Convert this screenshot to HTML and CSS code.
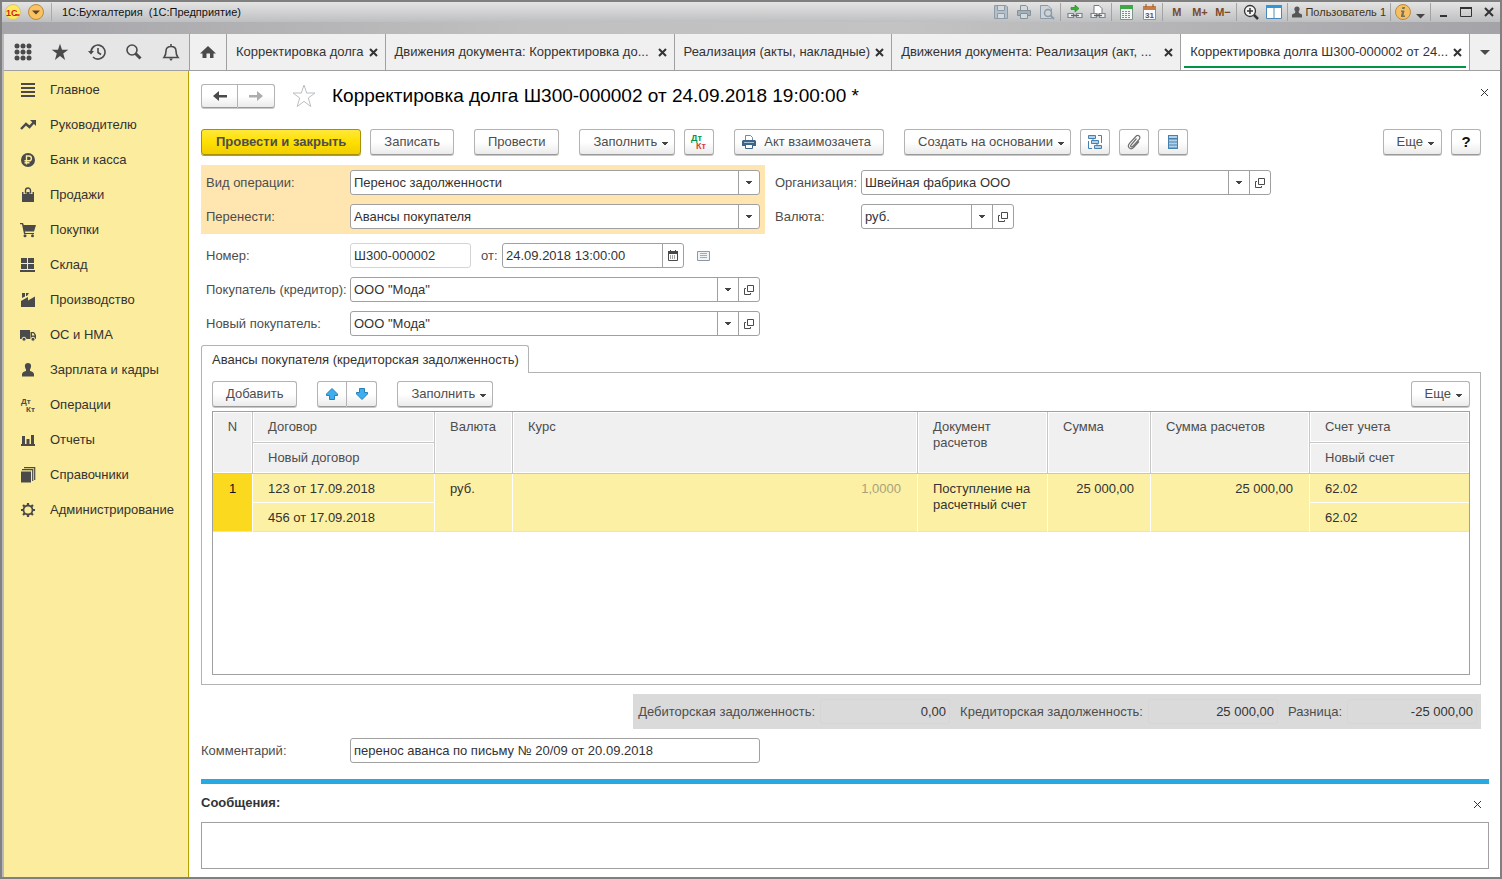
FILE: index.html
```
<!DOCTYPE html>
<html lang="ru">
<head>
<meta charset="utf-8">
<title>1С:Бухгалтерия (1С:Предприятие)</title>
<link rel="stylesheet" href="styles.css">
</head>
<body>
<svg class="sprite" aria-hidden="true">
  <symbol id="caret" viewBox="0 0 6 4"><path d="M0 0H6V1H5V2H4V3H2V2H1V1H0Z"/></symbol>
  <symbol id="cross" viewBox="0 0 9 9"><path d="M1 1L8 8M8 1L1 8" fill="none" stroke="currentColor"/></symbol>
  <symbol id="open" viewBox="0 0 10 10"><path d="M3.500 .5H9.500V6.500H3.500ZM2 3.500H.5V9.500H6.500V8" fill="none" stroke="currentColor"/></symbol>
  <symbol id="star" viewBox="0 0 24 24"><path d="M12 1L14.700 9H23L16.300 14L18.800 22.500L12 17.400L5.200 22.500L7.700 14L1 9H9.300Z"/></symbol>
  <symbol id="arrow-up" viewBox="0 0 12 12"><path d="M6 .5L11.500 6V7.500H8.500V11.500H3.500V7.500H.5V6Z" fill="#3eaef0" stroke="#2580b5"/></symbol>
  <symbol id="chain" viewBox="0 0 16 16"><path d="M1 9.500H6.500V13.500H1ZM9.500 9.500H15V13.500H9.500Z" fill="#eef0f2" stroke="#7b868e" stroke-width="1.200"/><path d="M4 11.500H12" stroke="#5a666e" stroke-width="1.300"/></symbol>
</svg>
<div class="window">
  <header class="titlebar">
    <div class="titlebar-row">
      <svg class="logo" viewBox="0 0 16 16"><circle cx="8" cy="8" r="7.500" fill="#ffe95c" stroke="#d9c67c"/><text x="1" y="11.500" class="logo-text">1С</text><path d="M10 11H14.500" stroke="#d8211c" stroke-width="1.500"/></svg>
      <button class="round-menu" aria-label="Меню"><svg width="16" height="16" viewBox="0 0 16 16"><circle cx="8" cy="8" r="7.500" fill="#fac263" stroke="#b98a3d"/><path d="M4 6.500H12L8 10.500Z" fill="#5b4626"/></svg></button>
      <h1 class="app-title">1С:Бухгалтерия&nbsp; (1С:Предприятие)</h1>
      <div class="tool-group plain">
        <button aria-label="Сохранить"><svg width="16" height="16" viewBox="0 0 16 16" fill="none" stroke="#8c9ba7"><path d="M1.500 1.500H13L14.500 3V14.500H1.500Z" fill="#b4c0c9"/><path d="M4.500 2V6.500H11.500V2M4.500 14V9.500H11.500V14" fill="#d4d9dc"/></svg></button>
        <button aria-label="Печать"><svg width="16" height="16" viewBox="0 0 16 16" fill="#a4b0b8" stroke="#84929c"><path d="M4.500 6V1.500H10L11.500 3V6" fill="#d5d9db"/><path d="M1.500 6.500H14.500V11.500H1.500Z"/><path d="M4.500 9.500H11.500V14.500H4.500Z" fill="#d5d9db"/></svg></button>
        <button aria-label="Просмотр"><svg width="16" height="16" viewBox="0 0 16 16" fill="none" stroke="#8c9ba7"><path d="M1.500 1.500H9L12.500 5V14.500H1.500Z" fill="#cdd3d6"/><circle cx="9" cy="9" r="3.500" stroke-width="1.500"/><path d="M11.500 11.500L15 15" stroke-width="2"/></svg></button>
      </div>
      <div class="tool-group">
        <button aria-label="Получить ссылку"><svg width="16" height="16" viewBox="0 0 16 16"><use href="#chain"/><path d="M4 3.500H8V1L12 4.500L8 8V5.500H4Z" fill="#35b335" stroke="#188119" stroke-width=".6"/></svg></button>
        <button aria-label="Перейти по ссылке"><svg width="16" height="16" viewBox="0 0 16 16"><path d="M4 1.500H9L12 4.500V10H4Z" fill="#fff" stroke="#717b82"/><use href="#chain"/></svg></button>
      </div>
      <div class="tool-group">
        <button aria-label="Калькулятор"><svg width="16" height="16" viewBox="0 0 16 16"><path d="M2.500 1.500H14.500V15.500H2.500Z" fill="#f4f6f5" stroke="#7e938a"/><path d="M2 1H15V5H2Z" fill="#41a647"/><path d="M4 7.500H13M4 9.500H13M4 11.500H13M4 13.500H13" stroke="#7c8d95" stroke-dasharray="2 1"/></svg></button>
        <button aria-label="Календарь"><svg width="16" height="16" viewBox="0 0 16 16"><path d="M2.500 2.500H14.500V15.500H2.500Z" fill="#f9fafb" stroke="#8494a0"/><path d="M2 2H15V6H2Z" fill="#c87b45"/><path d="M5 0V3M12 0V3" stroke="#80512f"/><text x="4" y="13.500" class="cal-text">31</text></svg></button>
      </div>
      <div class="tool-group memory"><button>M</button><button>M+</button><button>M−</button></div>
      <div class="tool-group">
        <button aria-label="Масштаб"><svg width="16" height="16" viewBox="0 0 16 16" fill="none" stroke="#343434"><circle cx="7" cy="7" r="5.500" fill="#f4f4f4" stroke-width="1.300"/><path d="M4 7H10M7 4V10" stroke-width="1.500"/><path d="M11 11L15 15" stroke-width="2.500"/></svg></button>
        <button aria-label="Панели"><svg width="16" height="16" viewBox="0 0 16 16"><path d="M.5 1.500H15.500V14.500H.5Z" fill="#fff" stroke="#4b87b8"/><path d="M0 1H16V4H0Z" fill="#3096dc"/><path d="M8 4V14" stroke="#5d8bb0"/></svg></button>
      </div>
      <div class="tool-group user"><button><svg width="10" height="12" viewBox="0 0 10 12" fill="#565656"><circle cx="5" cy="3" r="2.600"/><path d="M3.500 5H6.500L7 7L10 8.500V11.500H0V8.500L3 7Z"/></svg>Пользователь 1</button></div>
      <div class="tool-group info">
        <button aria-label="Справка"><svg width="16" height="16" viewBox="0 0 16 16"><circle cx="8" cy="8" r="7.500" fill="#f5c064" stroke="#b98a3d"/><path d="M7.500 3H10L9.500 5H7ZM6 6.500H9.500L8.500 11.500H10V13H6V11.500L7 8H6Z" fill="#7b705d"/></svg></button>
        <button class="info-caret" aria-label="Еще"><svg width="9" height="5" viewBox="0 0 9 5"><path d="M0 0H9L4.500 4.500Z" fill="#454545"/></svg></button>
      </div>
      <div class="tool-group win">
        <button aria-label="Свернуть"><svg width="12" height="12" viewBox="0 0 12 12"><path d="M3 10H10" stroke="#333" stroke-width="2"/></svg></button>
        <button aria-label="Развернуть"><svg width="12" height="12" viewBox="0 0 12 12"><path d="M.5 1.500H11.500V10.500H.5Z" fill="none" stroke="#333"/><path d="M0 2H12" stroke="#333" stroke-width="2"/></svg></button>
        <button aria-label="Закрыть"><svg width="12" height="12" viewBox="0 0 12 12"><path d="M2 2L10 10M10 2L2 10" stroke="#333" stroke-width="2"/></svg></button>
      </div>
    </div>
  </header>

  <nav class="tabbar">
    <div class="quick">
      <button aria-label="Функции"><svg width="18" height="18" viewBox="0 0 18 18" fill="#4a4a4a"><circle cx="3" cy="3" r="2.500"/><circle cx="9" cy="3" r="2.500"/><circle cx="15" cy="3" r="2.500"/><circle cx="3" cy="9" r="2.500"/><circle cx="9" cy="9" r="2.500"/><circle cx="15" cy="9" r="2.500"/><circle cx="3" cy="15" r="2.500"/><circle cx="9" cy="15" r="2.500"/><circle cx="15" cy="15" r="2.500"/></svg></button>
      <button aria-label="Избранное"><svg width="18" height="18" fill="#4a4a4a"><use href="#star"/></svg></button>
      <button aria-label="История"><svg width="18" height="18" viewBox="0 0 18 18" fill="none" stroke="#4a4a4a" stroke-width="1.600"><path d="M3 9A7 7 0 1 1 5 14"/><path d="M10 5V9.500L13 11.500"/><path d="M0 8H6L3 11.500Z" fill="#4a4a4a" stroke="none"/></svg></button>
      <button aria-label="Поиск"><svg width="18" height="18" viewBox="0 0 18 18" fill="none" stroke="#4a4a4a"><circle cx="7" cy="7" r="5" stroke-width="1.600"/><path d="M10.500 10.500L15.500 15.500" stroke-width="3"/></svg></button>
      <button aria-label="Уведомления"><svg width="18" height="18" viewBox="0 0 18 18" fill="none" stroke="#4a4a4a" stroke-width="1.600"><path d="M2 14.500C4 12 4 11 4 8C4 5 6 3.500 9 3.500S14 5 14 8C14 11 14 12 16 14.500ZM9 1V3"/><path d="M7 15.500H11L9 18Z" fill="#4a4a4a" stroke="none"/></svg></button>
    </div>
    <a class="tab home" href="#" aria-label="Начальная страница"><svg width="16" height="14" viewBox="0 0 16 14" fill="#4a4a4a"><path d="M8 1L16 8.500H13.500V13H10V8.500H6.500V13H2.500V8.500H0Z"/></svg></a>
    <div class="tab"><a href="#">Корректировка долга</a><button aria-label="Закрыть"><svg width="9" height="9"><use href="#cross"/></svg></button></div>
    <div class="tab wide"><a href="#">Движения документа: Корректировка до...</a><button aria-label="Закрыть"><svg width="9" height="9"><use href="#cross"/></svg></button></div>
    <div class="tab"><a href="#">Реализация (акты, накладные)</a><button aria-label="Закрыть"><svg width="9" height="9"><use href="#cross"/></svg></button></div>
    <div class="tab wide"><a href="#">Движения документа: Реализация (акт, ...</a><button aria-label="Закрыть"><svg width="9" height="9"><use href="#cross"/></svg></button></div>
    <div class="tab wide active"><a href="#">Корректировка долга Ш300-000002 от 24...</a><button aria-label="Закрыть"><svg width="9" height="9"><use href="#cross"/></svg></button></div>
    <button class="tab-more" aria-label="Все вкладки"><svg width="10" height="5" viewBox="0 0 10 5"><path d="M0 0H10L5 5Z" fill="#4a4a4a"/></svg></button>
  </nav>

  <div class="workspace">
    <nav class="sidebar">
      <a href="#"><svg viewBox="0 0 16 16"><path d="M1 2H15M1 6H15M1 10H15M1 14H15" stroke="#4a4a4a" stroke-width="2"/></svg>Главное</a>
      <a href="#"><svg viewBox="0 0 16 16"><path d="M1 12L6 7L9.500 10L14 5" fill="none" stroke="#4a4a4a" stroke-width="2.400"/><path d="M10 3H16V9Z"/></svg>Руководителю</a>
      <a href="#"><svg viewBox="0 0 16 16"><circle cx="8" cy="8" r="7"/><path d="M6.500 12.500V4H9A2.200 2.200 0 0 1 9 8.800H4.500M4.500 10.800H9.500" fill="none" stroke="#fbec9e" stroke-width="1.400"/></svg>Банк и касса</a>
      <a href="#"><svg viewBox="0 0 16 16"><path d="M2 5H14V15H2Z"/><path d="M5 7V3.500A3 2.800 0 0 1 11 3.500V7" fill="none" stroke="#fbec9e" stroke-width="3"/><path d="M5.500 6.500V3.500A2.500 2.500 0 0 1 10.500 3.500V6.500" fill="none" stroke="#4a4a4a" stroke-width="1.400"/></svg>Продажи</a>
      <a href="#"><svg viewBox="0 0 16 16"><path d="M0 1H3L3.800 3H16L14 9.500H5L5.300 11H14V12H4L2 2.300H0Z"/><circle cx="5" cy="13.800" r="1.500"/><circle cx="12.500" cy="13.800" r="1.500"/></svg>Покупки</a>
      <a href="#"><svg viewBox="0 0 16 16"><path d="M1 1H7V6H1ZM8 1H14V6H8ZM1 7H7V12H1ZM8 7H14V12H8ZM0 13H15V15H0Z"/></svg>Склад</a>
      <a href="#"><svg viewBox="0 0 16 16"><path d="M1 15V9L8 5V8.500L15 4.500V15ZM2 1H5V4.500L2 6ZM6 1H9L7 4H6Z"/></svg>Производство</a>
      <a href="#"><svg viewBox="0 0 16 16"><path d="M0 3H10V12H0ZM10.500 5H14L16 8V12H10.500Z"/><path d="M12 6.200H13.500L14.700 8.500H12Z" fill="#fbec9e"/><g stroke="#fbec9e"><circle cx="4" cy="12.200" r="2"/><circle cx="13" cy="12.200" r="2"/></g></svg>ОС и НМА</a>
      <a href="#"><svg viewBox="0 0 16 16"><path d="M8 1C12 1 11.500 5 10 7.500V9C12.500 9.500 14 10.500 14 12.500V14.500H2V12.500C2 10.500 3.500 9.500 6 9V7.500C4.500 5 4 1 8 1Z"/></svg>Зарплата и кадры</a>
      <a href="#"><svg viewBox="0 0 16 16" class="dtkt"><text x="1" y="7">Дт</text><text x="6" y="15">Кт</text></svg>Операции</a>
      <a href="#"><svg viewBox="0 0 16 16"><path d="M2 4H5V12H2ZM6.500 7H9.500V12H6.500ZM11 3H14V12H11ZM1 12H15V14H1Z"/></svg>Отчеты</a>
      <a href="#"><svg viewBox="0 0 16 16"><path d="M1 4.500H11V15.500H1Z"/><path d="M2 2.700H12.700V14M4 .7H14.700V13" fill="none" stroke="#4a4a4a" stroke-width="1.200"/></svg>Справочники</a>
      <a href="#"><svg viewBox="0 0 16 16"><g fill="none" stroke="#4a4a4a"><circle cx="8" cy="8" r="4.500" stroke-width="1.800"/><path d="M8 1V3.500M8 12.500V15M1 8H3.500M12.500 8H15M3 3L4.800 4.800M11.200 11.200L13 13M13 3L11.200 4.800M4.800 11.200L3 13" stroke-width="2.200"/></g></svg>Администрирование</a>
    </nav>

    <main class="document">
      <div class="heading">
        <div class="pair nav-pair">
          <button class="btn" aria-label="Назад"><svg width="14" height="12" viewBox="0 0 14 12"><path d="M0 6L6 1V5H14V7.500H6V11Z" fill="#4a4a4a"/></svg></button><button class="btn" aria-label="Вперед"><svg width="14" height="12" viewBox="0 0 14 12"><path d="M14 6L8 1V5H0V7.500H8V11Z" fill="#adadad"/></svg></button>
        </div>
        <button class="favorite" aria-label="В избранное"><svg width="24" height="24" fill="#fff" stroke="#b9bfc5"><use href="#star"/></svg></button>
        <h2>Корректировка долга Ш300-000002 от 24.09.2018 19:00:00 *</h2>
        <button class="close" aria-label="Закрыть"><svg width="9" height="9"><use href="#cross"/></svg></button>
      </div>

      <div class="commands">
        <button class="btn primary">Провести и закрыть</button>
        <button class="btn">Записать</button>
        <button class="btn apart">Провести</button>
        <button class="btn menu apart">Заполнить<svg class="caret"><use href="#caret"/></svg></button>
        <button class="btn icon" aria-label="Дт Кт"><svg width="18" height="18" viewBox="0 0 18 18" class="dtkt color"><text x="1" y="8">Дт</text><text x="6" y="16">Кт</text></svg></button>
        <button class="btn print apart"><svg width="14" height="14" viewBox="0 0 14 14"><path d="M3.500 5V.5H8.500L10.500 2.500V5" fill="#fff" stroke="#6f8ba5"/><path d="M1 5H13L14 6V11H0V6Z" fill="#3c6489"/><path d="M2 7.500H12" stroke="#a9c1d6"/><path d="M3.500 9.500H10.500V13.500H3.500Z" fill="#fff" stroke="#3c6489"/></svg>Акт взаимозачета</button>
        <button class="btn menu apart">Создать на основании<svg class="caret"><use href="#caret"/></svg></button>
        <button class="btn icon" aria-label="Структура"><svg width="16" height="16" viewBox="0 0 16 16" fill="#b3d2ea" stroke="#4580ae"><path d="M1.500 1.500H8.500V4.500H1.500ZM4.500 6.500H11.500V9.500H4.500ZM7.500 11.500H14.500V14.500H7.500Z"/><path d="M11 1.500H14.500V9M1.500 7V14.500H5M6 5V6M10 10V11" fill="none"/></svg></button>
        <button class="btn icon" aria-label="Файлы"><svg width="16" height="16" viewBox="0 0 16 16" fill="none" stroke="#707070" stroke-width="1.200"><path d="M10.500 4.500L5 11C4 12.500 5.500 13.500 6.800 12.300L13 5.500C15.500 2.500 12 .2 9.800 2.500L3.500 9.300C.5 13 4.500 16.500 7.500 13.500L13 7.500"/></svg></button>
        <button class="btn icon" aria-label="Список"><svg width="16" height="16" viewBox="0 0 16 16"><path d="M3 1H13V15H3Z" fill="#4580ae"/><path d="M4 3H12M4 6.500H12M4 9.500H12M4 12.500H12" stroke="#b3d2ea" stroke-width="2"/></svg></button>
        <button class="btn menu end">Еще<svg class="caret"><use href="#caret"/></svg></button>
        <button class="btn icon help">?</button>
      </div>

      <div class="form">
        <div class="column left">
          <div class="highlight">
            <div class="row"><label for="kind">Вид операции:</label><div class="field wide"><select id="kind"><option>Перенос задолженности</option></select><svg class="caret"><use href="#caret"/></svg></div></div>
            <div class="row"><label for="move">Перенести:</label><div class="field wide"><select id="move"><option>Авансы покупателя</option></select><svg class="caret"><use href="#caret"/></svg></div></div>
          </div>
          <div class="row"><label for="number">Номер:</label><div class="field number"><input id="number" value="Ш300-000002"></div><label class="from" for="date">от:</label><div class="field date"><input id="date" value="24.09.2018 13:00:00"><button aria-label="Календарь"><svg width="10" height="11" viewBox="0 0 10 11"><path d="M.5 2H9.500V10.500H.5Z" fill="none" stroke="#4a4a4a"/><path d="M0 1H10V4H0ZM2 0H3V2H2ZM7 0H8V2H7Z" fill="#4a4a4a"/><path d="M2 6H8M2 8H8" stroke="#4a4a4a" stroke-dasharray="1 1"/></svg></button></div><svg class="note" width="13" height="10" viewBox="0 0 13 10"><path d="M.5 .5H12.500V9.500H.5Z" fill="#f1f4f6" stroke="#8b9aa8"/><path d="M3 2.500H10M3 4.500H10M3 6.500H10" stroke="#a0acb7"/></svg></div>
          <div class="row"><label for="buyer">Покупатель (кредитор):</label><div class="field wide ref"><select id="buyer"><option>ООО "Мода"</option></select><svg class="caret"><use href="#caret"/></svg><button aria-label="Открыть"><svg width="10" height="10"><use href="#open"/></svg></button></div></div>
          <div class="row"><label for="newbuyer">Новый покупатель:</label><div class="field wide ref"><select id="newbuyer"><option>ООО "Мода"</option></select><svg class="caret"><use href="#caret"/></svg><button aria-label="Открыть"><svg width="10" height="10"><use href="#open"/></svg></button></div></div>
        </div>
        <div class="column right">
          <div class="row"><label for="org">Организация:</label><div class="field wide ref"><select id="org"><option>Швейная фабрика ООО</option></select><svg class="caret"><use href="#caret"/></svg><button aria-label="Открыть"><svg width="10" height="10"><use href="#open"/></svg></button></div></div>
          <div class="row"><label for="currency">Валюта:</label><div class="field short ref"><select id="currency"><option>руб.</option></select><svg class="caret"><use href="#caret"/></svg><button aria-label="Открыть"><svg width="10" height="10"><use href="#open"/></svg></button></div></div>
        </div>
      </div>

      <div class="page-tabs"><button class="page-tab">Авансы покупателя (кредиторская задолженность)</button></div>
      <section class="page">
        <div class="commands">
          <button class="btn">Добавить</button>
          <div class="pair apart"><button class="btn" aria-label="Вверх"><svg width="12" height="12"><use href="#arrow-up"/></svg></button><button class="btn" aria-label="Вниз"><svg class="flip" width="12" height="12"><use href="#arrow-up"/></svg></button></div>
          <button class="btn menu apart">Заполнить<svg class="caret"><use href="#caret"/></svg></button>
          <button class="btn menu end">Еще<svg class="caret"><use href="#caret"/></svg></button>
        </div>
        <div class="grid">
          <table>
            <colgroup><col class="c-n"><col class="c-contract"><col class="c-cur"><col><col class="c-doc"><col class="c-sum"><col class="c-calc"><col class="c-acc"></colgroup>
            <thead>
              <tr><th rowspan="2" class="n">N</th><th>Договор</th><th rowspan="2">Валюта</th><th rowspan="2">Курс</th><th rowspan="2">Документ расчетов</th><th rowspan="2">Сумма</th><th rowspan="2">Сумма расчетов</th><th>Счет учета</th></tr>
              <tr><th>Новый договор</th><th>Новый счет</th></tr>
            </thead>
            <tbody>
              <tr><td rowspan="2" class="n">1</td><td>123 от 17.09.2018</td><td rowspan="2">руб.</td><td rowspan="2" class="num muted">1,0000</td><td rowspan="2">Поступление на расчетный счет</td><td rowspan="2" class="num">25 000,00</td><td rowspan="2" class="num">25 000,00</td><td>62.02</td></tr>
              <tr><td>456 от 17.09.2018</td><td>62.02</td></tr>
            </tbody>
          </table>
        </div>
      </section>

      <div class="totals">
        <label for="debit">Дебиторская задолженность:</label><input id="debit" value="0,00" readonly>
        <label for="credit">Кредиторская задолженность:</label><input id="credit" value="25 000,00" readonly>
        <label for="diff">Разница:</label><input id="diff" value="-25 000,00" readonly>
      </div>

      <div class="row comment"><label for="comment">Комментарий:</label><div class="field wide"><input id="comment" value="перенос аванса по письму № 20/09 от 20.09.2018"></div></div>

      <section class="messages">
        <div class="messages-head"><h3>Сообщения:</h3><button class="close" aria-label="Закрыть"><svg width="9" height="9"><use href="#cross"/></svg></button></div>
        <textarea aria-label="Сообщения"></textarea>
      </section>
    </main>
  </div>
</div>
</body>
</html>
```
FILE: styles.css
```
* { box-sizing: border-box; }

:root {
  --line: #a0a0a0;
  --ink: #333;
  --label: #4d4d4d;
  --icon: #4a4a4a;
  --field-h: 25px;
  --gap: 9px;
}

body {
  margin: 0;
  font: 13px/16px "Liberation Sans", Arial, sans-serif;
  color: var(--ink);
  background: #fff;
}

button, input, select, textarea { font: inherit; color: inherit; margin: 0; }
button { padding: 0; border: 0; background: none; display: inline-flex; align-items: center; justify-content: center; white-space: nowrap; }
a { color: inherit; text-decoration: none; }
h1, h2, h3 { margin: 0; font-weight: normal; }
svg { flex: none; display: block; }
.sprite { position: absolute; width: 0; height: 0; }
.caret { width: 6px; height: 4px; fill: #444; }
.flip { transform: rotate(180deg); }

.window {
  min-height: 100vh;
  display: flex;
  flex-direction: column;
  border: 2px solid #808080;
  background: linear-gradient(90deg, #b8b8bc 2px, #fff 2px);
}

/* Title bar */
.titlebar {
  height: 32px;
  background: linear-gradient(90deg, #a5a5aa, #c0c0c0 35%, #c3c3c3 60%, #a3a3a8);
}
.titlebar-row {
  display: flex;
  align-items: center;
  height: 20px;
  padding-left: 3px;
  background: linear-gradient(#e4e4e4, #bebfc1);
}
.logo { width: 16px; height: 16px; }
.logo-text { font: bold 9px "Liberation Sans", sans-serif; fill: #d8211c; }
.cal-text { font: bold 8px "Liberation Sans", sans-serif; fill: #555; }
.round-menu { margin: 0 7px; }
.app-title {
  flex: 1;
  padding-left: 10px;
  border-left: 1px solid #aaa;
  font-size: 11px;
  line-height: 18px;
  color: #111;
}
.tool-group { display: flex; align-items: center; height: 18px; padding: 0 2px; border-left: 1px solid #a3a3a3; }
.tool-group.plain { border-left-color: transparent; }
.tool-group button { width: 23px; height: 18px; }
.memory button { color: #7a4a2a; font-weight: bold; font-size: 11px; }
.tool-group.user { padding: 0 4px; }
.tool-group.user button { width: auto; gap: 3px; font-size: 11px; color: #3f3418; }
.info button:first-child { width: 20px; }
.tool-group .info-caret { width: 15px; padding-top: 8px; }
.tool-group.win { padding: 0; }

/* Open windows */
.tabbar { display: flex; height: 37px; margin-left: 2px; border-bottom: 1px solid var(--line); background: #f0f0f0; }
.quick { width: 186px; display: flex; align-items: center; background: #e6e6e6; border-right: 1px solid var(--line); }
.quick button { width: 37px; height: 36px; }
.tab { display: flex; align-items: center; justify-content: space-between; gap: 5px; padding: 0 7px 0 9px; border-right: 1px solid var(--line); white-space: nowrap; }
.tab.home { width: 37px; padding: 0; justify-content: center; }
.tab.wide { width: 289px; }
.tab button svg { stroke-width: 2; }
.tab.active { position: relative; background: #fff; }
.tab.active::after { content: ""; position: absolute; left: 3px; right: 3px; bottom: 2px; height: 2px; background: #009646; }
.tab-more { flex: 1; min-width: 24px; }

/* Sections */
.workspace { flex: 1; display: flex; margin-left: 2px; }
.sidebar { width: 185px; flex: none; padding-top: 1px; background: #fbec9e; border-right: 1px solid #b9a300; }
.sidebar a { display: flex; align-items: center; gap: 14px; height: 35px; padding-left: 16px; }
.sidebar svg { width: 16px; height: 16px; fill: var(--icon); }
.dtkt text { font: bold 8px "Liberation Sans", sans-serif; }
.dtkt.color text { font-size: 9px; fill: #009646; }
.dtkt.color text + text { fill: #e03b3b; }

/* Document */
.document { flex: 1; min-width: 0; display: flex; flex-direction: column; padding: 12px 11px 8px 12px; }
.heading { display: flex; align-items: center; height: 26px; margin-bottom: 20px; }
.heading h2 { font-size: 19px; line-height: 24px; color: #000; }
.favorite { margin: 0 16px 0 17px; }
.close { width: 9px; height: 9px; margin-left: auto; }
.heading .close { margin-bottom: 8px; }

.btn {
  height: 26px;
  padding: 0 13px;
  border: 1px solid #b3b3b3;
  border-bottom-color: #999;
  border-radius: 3px;
  background: linear-gradient(#fff 50%, #ebebeb);
  box-shadow: 0 1px 0 #c8c8c8;
  color: var(--label);
}
.btn.primary { padding: 0 14px; border-color: #a89000; background: linear-gradient(#ffe83a, #ffe000 50%, #efcd00); font-weight: bold; box-shadow: 0 1px 0 #a89a50; }
.btn.menu { padding: 0 6px 0 13px; gap: 5px; }
.btn.menu .caret { margin-top: 3px; }
.btn.icon { width: 30px; padding: 0; }
.btn.help { color: #111; font-weight: bold; font-size: 15px; }
.btn.print { padding: 0 12px 0 7px; gap: 8px; }
.btn.menu.end { margin-left: auto; padding-right: 7px; }
.pair { display: flex; }
.pair .btn { width: 30px; padding: 0; }
.pair .btn:first-child { border-radius: 3px 0 0 3px; }
.pair .btn:last-child { border-radius: 0 3px 3px 0; border-left: 0; }
.nav-pair .btn { width: 37px; height: 24px; }

.commands { display: flex; gap: var(--gap); padding-right: 8px; }
.apart { margin-left: 11px; }

.form { display: flex; gap: 10px; padding-top: 10px; }
.column { display: flex; flex-direction: column; gap: var(--gap); }
.left { width: 564px; flex: none; }
.highlight { display: flex; flex-direction: column; gap: var(--gap); padding: 5px 0; background: #ffe6b0; }
.right { padding-top: 5px; }
.row { display: flex; align-items: center; height: var(--field-h); }
.row label { width: 149px; padding-left: 5px; color: var(--label); }
.right label { width: 86px; padding-left: 0; }
.row .from { width: 31px; padding-left: 10px; }

.field { position: relative; display: flex; height: var(--field-h); border: 1px solid var(--line); border-radius: 3px; background: #fff; }
.field.wide { width: 410px; }
.field.short { width: 153px; }
.field.number { width: 121px; border-color: #d4d4d4; }
.field.date { width: 182px; }
.field input, .field select { flex: 1; min-width: 0; padding: 0 3px; border: 0; outline: 0; background: none; appearance: none; }
.field button { width: 21px; border-left: 1px solid var(--line); color: var(--icon); }
.field select { border-right: 20px solid transparent; background: linear-gradient(var(--line), var(--line)) right / 1px 100% no-repeat padding-box; }
.field .caret { position: absolute; right: 7px; top: 10px; }
.field.ref .caret { right: 28px; }
.note { margin-left: 13px; }

/* Tabular section */
.page-tabs { margin-top: 9px; display: flex; }
.page-tab { position: relative; height: 28px; margin-bottom: -1px; padding: 0 9px 0 10px; border: 1px solid #b3b3b3; border-bottom: 0; border-radius: 3px 3px 0 0; background: #fff; }
.page { flex: 1; display: flex; flex-direction: column; gap: 4px; margin-right: 8px; padding: 8px 10px 9px; border: 1px solid #b3b3b3; }
.page .commands { padding: 0; }
.grid { flex: 1; border: 1px solid var(--line); }
table { width: 100%; table-layout: fixed; border-collapse: separate; border-spacing: 0; }
.c-n { width: 40px; }
.c-contract { width: 182px; }
.c-cur { width: 78px; }
.c-doc { width: 130px; }
.c-sum { width: 103px; }
.c-calc { width: 159px; }
.c-acc { width: 159px; }
th, td { padding: 7px 15px 0; text-align: left; vertical-align: top; }
th { height: 31px; border-right: 1px solid #c6c6c6; border-bottom: 1px solid #c6c6c6; background: #f0f0f0; box-shadow: inset 0 0 0 1px #fff; color: var(--label); font-weight: normal; }
td { height: 29px; border-right: 1px solid #fff; border-bottom: 1px solid #fff; background: #fcf0a4; }
tr > :last-child { border-right: 0; }
tbody tr:first-child td[rowspan], tbody tr:last-child td { border-bottom-color: #e2e2e2; }
th.n, td.n { padding-left: 0; padding-right: 0; text-align: center; }
td.n { background: #fbd91f; color: #111; }
td.num { padding-right: 16px; text-align: right; }
.muted { color: #a8a27c; }

.totals { display: flex; align-items: center; align-self: flex-end; gap: 5px; height: 35px; margin: 9px 8px 9px 0; padding: 0 4px 0 5px; background: #dadada; color: var(--label); }
.totals input { width: 130px; height: 25px; padding: 0 3px; border: 1px solid #d6d6d6; border-radius: 3px; background: none; text-align: right; color: var(--ink); }
.totals input + label { margin-left: 5px; }
.comment label { padding-left: 0; }

.messages { margin-top: 16px; border-top: 5px solid #29a9e1; }
.messages-head { display: flex; align-items: center; height: 38px; padding-right: 7px; }
.messages h3 { font-size: 13px; font-weight: bold; }
.messages-head .close { margin-top: 2px; }
.messages textarea { display: block; width: 100%; height: 47px; border: 1px solid var(--line); border-radius: 0; resize: none; outline: 0; }
```
